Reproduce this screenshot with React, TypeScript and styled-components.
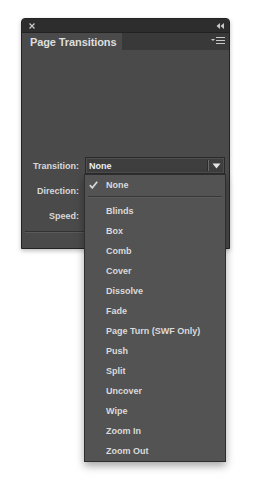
import styled, { createGlobalStyle } from "styled-components";

const items = [
	"Blinds",
	"Box",
	"Comb",
	"Cover",
	"Dissolve",
	"Fade",
	"Page Turn (SWF Only)",
	"Push",
	"Split",
	"Uncover",
	"Wipe",
	"Zoom In",
	"Zoom Out",
];

function App() {
	return (
		<>
			<GlobalStyle />
			<Panel>
				<TitleBar>
					<svg width="6" height="6" viewBox="0 0 6 6">
						<path d="M0.5 0.5 L5.5 5.5 M5.5 0.5 L0.5 5.5" stroke="#c8c8c8" strokeWidth="1.3" />
					</svg>
					<svg width="8" height="6" viewBox="0 0 8 6">
						<path d="M4 0 L0.5 3 L4 6 Z M8 0 L4.5 3 L8 6 Z" fill="#c8c8c8" />
					</svg>
				</TitleBar>
				<TabRow>
					<Tab>Page Transitions</Tab>
					<svg width="14" height="9" viewBox="0 0 14 9">
						<path d="M0 2 L4 2 L2 4 Z" fill="#c8c8c8" />
						<path d="M5 0.5 H14 M5 3.5 H14 M5 6.5 H14" stroke="#c8c8c8" strokeWidth="1.2" />
					</svg>
				</TabRow>
				<Body>
					<Form>
						<Row>
							<Label>Transition:</Label>
							<SelectWrap>
								<Select>
									<Value>None</Value>
									<Divider />
									<svg width="9" height="6" viewBox="0 0 9 6">
										<path d="M0.5 0.5 H8.5 L4.5 5.5 Z" fill="#e6e6e6" />
									</svg>
								</Select>
								<Menu>
									<Item>
										<Check>
											<svg width="9" height="8" viewBox="0 0 9 8">
												<path d="M0.8 4.2 L3.3 6.8 L8.2 0.8" stroke="#d6d6d6" strokeWidth="1.8" fill="none" />
											</svg>
										</Check>
										None
									</Item>
									<Separator />
									{items.map((name) => (
										<Item key={name}>
											<Check />
											{name}
										</Item>
									))}
								</Menu>
							</SelectWrap>
						</Row>
						<Row>
							<Label>Direction:</Label>
							<Select />
						</Row>
						<Row>
							<Label>Speed:</Label>
							<Select />
						</Row>
					</Form>
					<Rule />
				</Body>
			</Panel>
		</>
	);
}

const GlobalStyle = createGlobalStyle`
	html, body {
		margin: 0;
		min-height: 480px;
		background: #ffffff;
		font-family: "Liberation Sans", Arial, sans-serif;
	}
	#root {
		min-height: 480px;
	}
`;

const Panel = styled.div`
	margin: 18px 0 0 21px;
	width: 209px;
	border: 1px solid #232323;
	border-radius: 4px 4px 0 0;
	background: #4a4a4a;
	box-shadow: 0 2px 4px rgba(0, 0, 0, 0.25);
	box-sizing: border-box;
`;

const TitleBar = styled.div`
	height: 13px;
	display: flex;
	align-items: center;
	justify-content: space-between;
	padding: 0 5px 0 7px;
	background: #2d2d2d;
	border-radius: 3px 3px 0 0;
`;

const TabRow = styled.div`
	height: 17px;
	display: flex;
	align-items: center;
	justify-content: space-between;
	padding-right: 4px;
	background: #393939;
	border-top: 1px solid #222;
`;

const Tab = styled.div`
	height: 100%;
	width: 100px;
	box-sizing: border-box;
	padding: 1px 0 0 8px;
	display: flex;
	align-items: center;
	background: #4a4a4a;
	color: #dedede;
	font-size: 11px;
	font-weight: bold;
	letter-spacing: -0.1px;
`;

const Body = styled.div`
	height: 198px;
	padding-top: 103px;
	box-sizing: border-box;
	display: flex;
	flex-direction: column;
`;

const Form = styled.div`
	display: flex;
	flex-direction: column;
`;

const Row = styled.div`
	height: 25px;
	display: flex;
	align-items: center;
	gap: 6px;
`;

const Label = styled.div`
	width: 57px;
	text-align: right;
	color: #d8d8d8;
	font-size: 9px;
	font-weight: bold;
`;

const SelectWrap = styled.div`
	position: relative;
`;

const Select = styled.div`
	width: 140px;
	height: 17px;
	box-sizing: border-box;
	display: flex;
	align-items: center;
	padding: 0 3px 0 3px;
	background: #3e3e3e;
	border: 1px solid #2a2a2a;
	box-shadow: inset 0 0 0 1px #4f4f4f;
`;

const Value = styled.div`
	flex: 1;
	color: #e8eef8;
	font-size: 9px;
	font-weight: bold;
`;

const Divider = styled.div`
	width: 1px;
	height: 11px;
	margin-right: 3px;
	background: #6a6a6a;
	box-shadow: -1px 0 0 #2c2c2c;
`;

const Menu = styled.div`
	position: absolute;
	top: 17px;
	left: -1px;
	width: 142px;
	box-sizing: border-box;
	background: #535353;
	border: 1px solid #2e2e2e;
	box-shadow: 0 4px 8px rgba(0, 0, 0, 0.35);
	z-index: 2;
`;

const Item = styled.div`
	height: 20px;
	display: flex;
	align-items: center;
	color: #dadada;
	font-size: 9px;
	font-weight: bold;
`;

const Check = styled.div`
	width: 21px;
	padding-left: 4px;
	box-sizing: border-box;
	display: flex;
	align-items: center;
`;

const Separator = styled.div`
	height: 1px;
	margin: 1px 3px 3px 3px;
	background: #383838;
	border-bottom: 1px solid #5c5c5c;
`;

const Rule = styled.div`
	margin: 3px 3px 0 3px;
	height: 1px;
	background: #333;
	border-bottom: 1px solid #5a5a5a;
`;

export default App;
